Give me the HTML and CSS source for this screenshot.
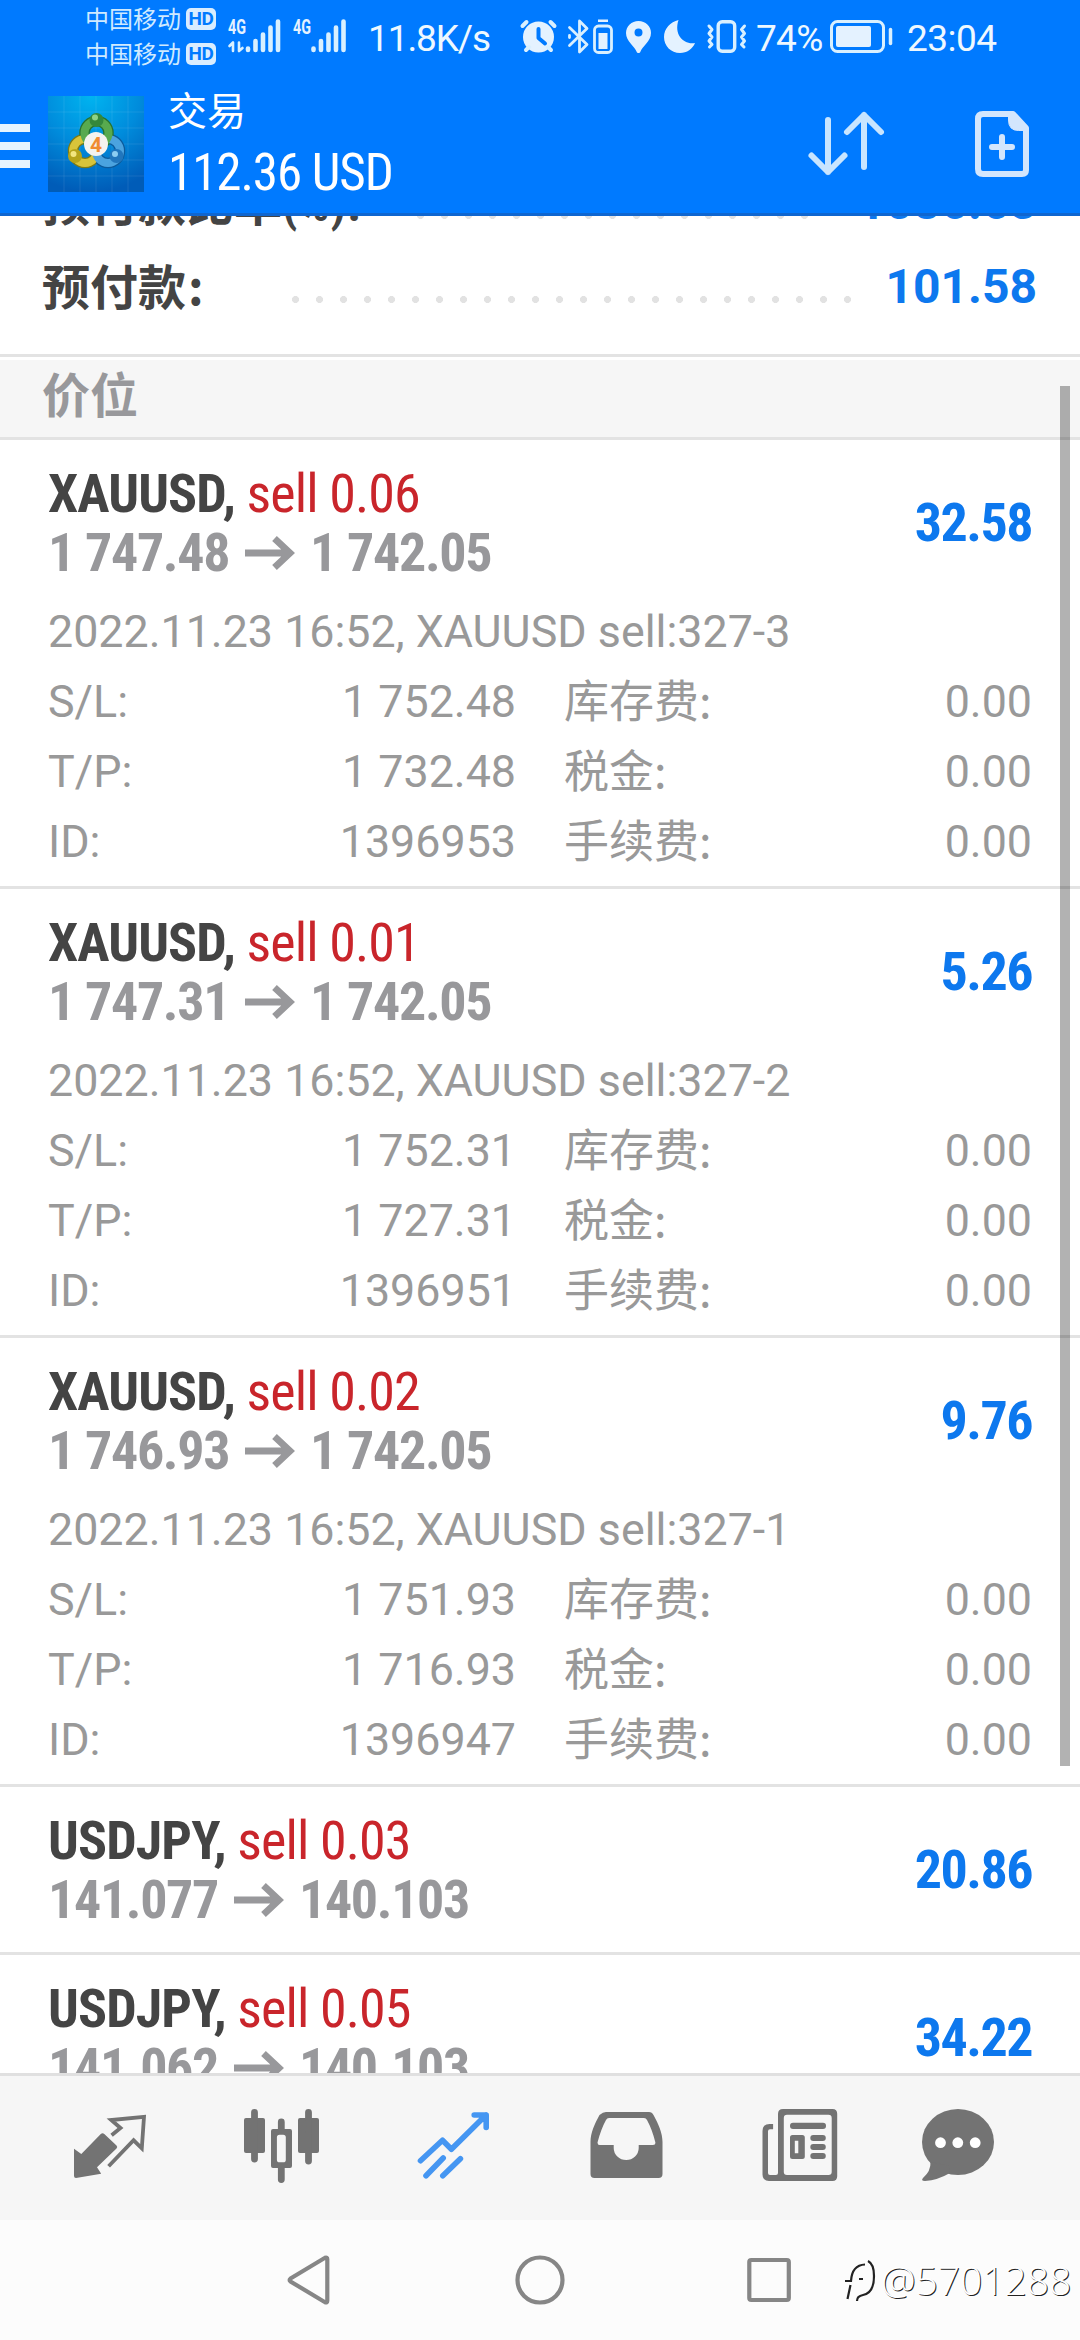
FILE: index.html
```html
<!DOCTYPE html>
<html lang="zh-CN">
<head>
<meta charset="utf-8">
<title>交易</title>
<link rel="stylesheet" href="styles.css">
</head>
<body>
<svg width="0" height="0" class="defs"><symbol id="arrow" viewBox="0 0 50 34"><path d="M0 17h44M29.500 2.500L45 17 29.500 31.500" fill="none" stroke="currentColor" stroke-width="6.800"/></symbol></svg>
<div class="screen">
  <header class="top">
    <div class="status">
      <div class="carriers">
        <div class="carrier"><span>中国移动</span><b class="hd">HD</b></div>
        <div class="carrier"><span>中国移动</span><b class="hd">HD</b></div>
      </div>
      <svg class="signals" width="122" height="72" viewBox="226 0 122 72">
        <g class="net"><text x="228" y="34" textLength="18" lengthAdjust="spacingAndGlyphs">4G</text><text x="293" y="34" textLength="18" lengthAdjust="spacingAndGlyphs">4G</text></g>
        <path d="M229.500 46l3.500-3.500V51M242.500 48l-3.500 3V42.500" class="line" stroke-width="2.600"/>
        <path d="M248 48.500v1.500M255.500 41v9M263 34.500V50M270.500 27.500V50M278 21.500V50M313.500 48.500v1.500M321 41v9M328.500 34.500V50M336 27.500V50M343.500 21.500V50" class="line" stroke-width="4.600"/>
      </svg>
      <span class="speed">11.8K/s</span>
      <svg class="tray" width="230" height="72" viewBox="519 0 230 72">
        <circle cx="538.500" cy="37" r="15.500"/>
        <path class="line" stroke-width="4" d="M522.500 26l4-4M554.500 26l-4-4M526 50l3-3M551 50l-3-3"/>
        <path class="cut" d="M538.500 29v9l6.500 5.500"/>
        <path class="line" stroke-width="2.800" d="M569.500 27.500L587 44.500 579.500 52V21L587 28.500 569.500 45.500M569.500 35.500v2"/>
        <rect class="line" stroke-width="2.800" x="594.500" y="26" width="17" height="26.500" rx="4"/>
        <path d="M598.500 33h9v16h-9zM598 19.500h10v2.500h-10z"/>
        <path fill-rule="evenodd" d="M638.500 21c7 0 12.500 5 12.500 12 0 8-9 14-10.500 18.500-.8 2-3.200 2-4 0C635 47 626 41 626 33c0-7 5.500-12 12.500-12zm0 7.500a4 4 0 1 0 0 8 4 4 0 0 0 0-8z"/>
        <path d="M678.500 20c-8 2-14.500 8.500-14.500 17 0 9 7 16 16 16 7 0 12.500-4 15-10-11 2-21.500-8-16.500-23z"/>
        <rect class="line" stroke-width="3.400" x="718.200" y="21.700" width="16.500" height="29.500" rx="4"/>
        <path class="line" stroke-width="3" d="M709 26l3 3.500-3 4 3 3.500-3 4 3 3.500-2.500 2.500M744.500 26l-3 3.500 3 4-3 3.500 3 4-3 3.500 2.500 2.500"/>
      </svg>
      <span class="percent">74%</span>
      <svg class="battery" width="66" height="72" viewBox="829 0 66 72">
        <rect class="line" stroke-width="3" x="831.500" y="21.500" width="52" height="30" rx="6"/>
        <rect x="836" y="26" width="35" height="21" rx="2"/>
        <path class="line" stroke-width="3.500" d="M890.500 29.500v14"/>
      </svg>
      <span class="clock">23:04</span>
    </div>
    <div class="appbar">
      <div class="menu"><i></i><i></i><i></i></div>
      <svg class="logo" width="96" height="96" viewBox="0 0 96 96">
        <defs>
          <radialGradient id="sky" cx=".45" cy="0" r="1"><stop offset="0" stop-color="#00b4f0"/><stop offset=".5" stop-color="#008cdc"/><stop offset="1" stop-color="#005cb8"/></radialGradient>
        </defs>
        <path fill="url(#sky)" d="M0 0h96v96H0z"/>
        <path stroke="#fff" stroke-opacity=".09" d="M16 0v96M32 0v96M48 0v96M64 0v96M80 0v96M0 16h96M0 32h96M0 48h96M0 64h96M0 80h96"/>
        <g fill="none">
          <circle cx="37" cy="55" r="12" stroke="#7c7a16" stroke-width="10.500"/>
          <circle cx="60" cy="55" r="12" stroke="#0c5b9c" stroke-width="10.500"/>
          <circle cx="48.500" cy="37" r="12" stroke="#27722f" stroke-width="10.500"/>
          <circle cx="37" cy="55" r="12" stroke="#d8c43a" stroke-width="8"/>
          <circle cx="60" cy="55" r="12" stroke="#4ba3df" stroke-width="8"/>
          <circle cx="48.500" cy="37" r="12" stroke="#58aa4e" stroke-width="8"/>
        </g>
        <circle cx="48.500" cy="24" r="7" fill="#34883c"/><circle cx="47" cy="21.500" r="3" fill="#8ed286"/>
        <circle cx="27" cy="60" r="7" fill="#b5a41b"/><circle cx="25.500" cy="58" r="3" fill="#f2e680"/>
        <circle cx="68.500" cy="60" r="7" fill="#2176bd"/><circle cx="67" cy="58" r="3" fill="#8ccdf2"/>
        <circle cx="48" cy="48" r="12" fill="#f4f3ef"/>
        <text x="48" y="55.500" class="four">4</text>
      </svg>
      <div class="heading"><span class="title">交易</span><span class="sum cond">112.36 USD</span></div>
      <svg class="sort" width="80" height="72" viewBox="806 108 80 72"><path d="M828 120v52M811.500 155.500L828 172l16.500-16.500M864 167v-52M847 132l17-17 17 17"/></svg>
      <svg class="add" width="56" height="70" viewBox="974 109 56 70"><path d="M983 114h30l13 14v42q0 4-4 4h-39q-5 0-5-5v-50q0-5 5-5z"/><path d="M1002 137v20M992 147h20"/><path d="M1008.500 114v6q0 10.500 10 10.500h7.500L1013 114z" fill="#d3e6fd" stroke-width="1"/></svg>
    </div>
  </header>

  <main class="content">
    <div class="summary">
      <div class="line-item first"><span class="label">预付款比率<span class="cond ratio">(%):</span></span><i class="dots dots-a"></i><b class="value">1086.63</b></div>
      <div class="line-item"><span class="label">预付款<span class="colon">:</span></span><i class="dots dots-b"></i><b class="value">101.58</b></div>
    </div>
    <h2 class="section">价位</h2>

    <article class="deal">
      <div class="deal-head">
        <div><p class="sym"><span class="cond"><b>XAUUSD,</b> <em>sell 0.06</em></span></p><p class="price"><b class="cond">1 747.48</b><svg class="arrow"><use href="#arrow"/></svg><b class="cond">1 742.05</b></p></div>
        <b class="profit cond">32.58</b>
      </div>
      <p class="note">2022.11.23 16:52, XAUUSD sell:327-3</p>
      <div class="grid">
        <p><span>S/L:</span><span>1 752.48</span></p><p><span class="cn">库存费:</span><span>0.00</span></p>
        <p><span>T/P:</span><span>1 732.48</span></p><p><span class="cn">税金:</span><span>0.00</span></p>
        <p><span>ID:</span><span>1396953</span></p><p><span class="cn">手续费:</span><span>0.00</span></p>
      </div>
    </article>

    <article class="deal">
      <div class="deal-head">
        <div><p class="sym"><span class="cond"><b>XAUUSD,</b> <em>sell 0.01</em></span></p><p class="price"><b class="cond">1 747.31</b><svg class="arrow"><use href="#arrow"/></svg><b class="cond">1 742.05</b></p></div>
        <b class="profit cond">5.26</b>
      </div>
      <p class="note">2022.11.23 16:52, XAUUSD sell:327-2</p>
      <div class="grid">
        <p><span>S/L:</span><span>1 752.31</span></p><p><span class="cn">库存费:</span><span>0.00</span></p>
        <p><span>T/P:</span><span>1 727.31</span></p><p><span class="cn">税金:</span><span>0.00</span></p>
        <p><span>ID:</span><span>1396951</span></p><p><span class="cn">手续费:</span><span>0.00</span></p>
      </div>
    </article>

    <article class="deal">
      <div class="deal-head">
        <div><p class="sym"><span class="cond"><b>XAUUSD,</b> <em>sell 0.02</em></span></p><p class="price"><b class="cond">1 746.93</b><svg class="arrow"><use href="#arrow"/></svg><b class="cond">1 742.05</b></p></div>
        <b class="profit cond">9.76</b>
      </div>
      <p class="note">2022.11.23 16:52, XAUUSD sell:327-1</p>
      <div class="grid">
        <p><span>S/L:</span><span>1 751.93</span></p><p><span class="cn">库存费:</span><span>0.00</span></p>
        <p><span>T/P:</span><span>1 716.93</span></p><p><span class="cn">税金:</span><span>0.00</span></p>
        <p><span>ID:</span><span>1396947</span></p><p><span class="cn">手续费:</span><span>0.00</span></p>
      </div>
    </article>

    <article class="deal">
      <div class="deal-head">
        <div><p class="sym"><span class="cond"><b>USDJPY,</b> <em>sell 0.03</em></span></p><p class="price"><b class="cond">141.077</b><svg class="arrow"><use href="#arrow"/></svg><b class="cond">140.103</b></p></div>
        <b class="profit cond">20.86</b>
      </div>
    </article>

    <article class="deal">
      <div class="deal-head">
        <div><p class="sym"><span class="cond"><b>USDJPY,</b> <em>sell 0.05</em></span></p><p class="price"><b class="cond">141.062</b><svg class="arrow"><use href="#arrow"/></svg><b class="cond">140.103</b></p></div>
        <b class="profit cond">34.22</b>
      </div>
    </article>
    <i class="scrollbar"></i>
  </main>

  <nav class="tabs">
    <svg viewBox="0 0 96 96"><path d="M12 48.700l7.300 5.300 19.500-20q1.800-1.500 3.500 0L54.500 45.500q1.500 1.500 0 3L35 67.300l4.200 6.400L14 77.900q-2 0-2-2z"/><path class="ln" stroke-width="3.800" d="M49.600 35.300l8.900-7.300-9.300-8L82 16.800l-2.200 31.500-8.200-8-25 26"/></svg>
    <svg viewBox="0 0 96 96"><rect x="10" y="18" width="21" height="35" rx="2"/><rect x="64" y="18" width="21" height="35" rx="2"/><path class="ln" stroke-width="6.800" stroke-linecap="round" d="M20.500 12.500v46.500M74.500 12.500V61M47.300 22v8M47.300 68v11.500"/><path fill-rule="evenodd" d="M39 29h17q2 0 2 2v35q0 2-2 2H39q-2 0-2-2V31q0-2 2-2zm6.500 5.700q-2.600 0-2.600 2.600v22.400q0 2.600 2.600 2.600h3.700q2.600 0 2.600-2.600V37.300q0-2.600-2.600-2.600z"/></svg>
    <svg class="on" viewBox="0 0 96 96"><path class="ln" stroke-width="5.600" stroke-linecap="round" stroke-linejoin="round" d="M14.500 60.700l22-20.400 8.900 9L80 15M68.200 15h12v12.500M76 16l4 5M20 75.700L37.200 58M36.800 75.700l17.600-17"/></svg>
    <svg viewBox="0 0 96 96"><path fill-rule="evenodd" d="M28 12h43q3 0 4.500 3c5 9 9 18 9 27v32q0 4-4 4h-64q-4 0-4-4V42c0-9 4-18 9-27Q25 12 28 12zm3 6q-2 0-3 2-5 9-8.500 22.500 0 2.500 2 2.500h14.200v3a12.500 12 0 0 0 25 0v-3h14.200q2.500 0 2.500-2.500Q74 29 69 20q-1-2-3-2z"/></svg>
    <svg viewBox="0 0 96 96"><path fill-rule="evenodd" d="M33 9h49.500q4.700 0 4.700 4.700v62.600q0 4.700-4.700 4.700H19q-6.500 0-6.500-6.500V31q0-7 7-7h3.600v5.300H20q-2 0-2 2V73q0 2 2 2h6q2 0 2-2V14q0-5 5-5zm4 5.700q-3.200 0-3.200 3.200V72q0 3 3.200 3h41.500q3.200 0 3.200-3V17.900q0-3.200-3.200-3.200z"/><rect x="40" y="22.700" width="36" height="6.300" rx="3"/><path fill-rule="evenodd" d="M42.500 35h9.800q2.500 0 2.500 2.500v19q0 2.500-2.500 2.500h-9.800Q40 59 40 56.500v-19Q40 35 42.500 35zm2.300 5.700v12.600h3.500V40.700z"/><path class="ln" stroke-width="6" stroke-linecap="round" d="M63.300 38h9.500M63.300 46.900h9.500M63.300 56h9.500"/></svg>
    <svg viewBox="0 0 96 96"><ellipse cx="36" cy="42" rx="36" ry="33"/><path d="M8.500 62q.5 9-7.500 16-2.500 3 2 3 13-1 24-7.500L28 66z"/><g fill="#fff"><circle cx="18.500" cy="42.700" r="5.400"/><circle cx="35.800" cy="42.700" r="5.400"/><circle cx="53.200" cy="42.700" r="5.400"/></g></svg>
  </nav>

  <div class="sysnav">
    <svg width="1080" height="120" viewBox="0 0 1080 120"><path d="M290.500 58.500L325 37.800q2.300-1 2.300 1.500v41.400q0 2.500-2.300 1.500L290.500 61.500q-1.800-1.500 0-3z"/><circle cx="540" cy="60" r="22.500"/><rect x="749.300" y="40" width="39.500" height="40" rx="2"/></svg>
    <div class="mark">
      <svg width="34" height="46" viewBox="0 0 34 46"><path d="M3.500 40l3-14M1 22h6q1-16 14-16.500M15 20h4M24 2q6 3 6 15 0 17-11 19-6 1-6 6"/></svg>
      <span>@5701288</span>
    </div>
  </div>
</div>
</body>
</html>
```
FILE: styles.css
```css
* { box-sizing: border-box; margin: 0; padding: 0; }
body { width: 1080px; height: 2340px; overflow: hidden; background: #fff; font-family: Roboto, "Noto Sans CJK SC", sans-serif; }
svg { display: block; flex: none; }
i, em { font-style: normal; }
.screen { display: flex; flex-direction: column; height: 2340px; }
.cond { font-family: "Roboto Condensed", Roboto, sans-serif; font-stretch: 75%; }

/* status bar and app bar */
.top { height: 216px; flex: none; background: #007aff; border-bottom: 3px solid #0f66d0; color: #eef8ff; }
.status { display: flex; height: 72px; padding-left: 85px; }
.carriers { padding-top: 1px; }
.carrier { display: flex; align-items: center; height: 35px; font: 24px/34px "Noto Sans CJK SC", sans-serif; color: #cfeaff; }
.carrier span { width: 101px; margin-top: -2px; }
.hd { width: 30px; height: 22px; border-radius: 5px; background: #d9edff; color: #007aff; font: bold 19px/22px Roboto, sans-serif; text-align: center; letter-spacing: -.5px; }
.signals, .tray, .battery { fill: #e4f2ff; }
.signals { margin-left: 10px; }
.net { font: bold 20px Roboto, sans-serif; }
.line { fill: none; stroke: #d9f0ff; stroke-linecap: round; stroke-linejoin: round; }
.cut { fill: none; stroke: #007aff; stroke-width: 4; stroke-linecap: round; stroke-linejoin: round; }
.speed, .percent, .clock { font-size: 37px; line-height: 77px; white-space: nowrap; }
.speed { width: 151px; margin-left: 20px; letter-spacing: -1.1px; }
.percent { width: 73px; margin-left: 7px; letter-spacing: -.7px; }
.clock { margin-left: 12px; letter-spacing: -.5px; }
.appbar { display: flex; height: 141px; }
.menu { display: flex; flex-direction: column; gap: 10px; width: 30px; padding-top: 52px; }
.menu i { height: 8px; background: #e6f4ff; }
.logo { margin: 24px 0 0 18px; }
.four { font: bold 21px Roboto, sans-serif; fill: #f08c32; text-anchor: middle; }
.heading { display: flex; flex-direction: column; width: 637px; margin-left: 24px; padding-top: 14px; color: #fff; }
.title { font: 39px/44px "Noto Sans CJK SC", sans-serif; }
.sum { font-size: 51px; line-height: 60px; margin-top: 13px; letter-spacing: -1.05px; }
.sort, .add { fill: none; stroke: #c8e5ff; stroke-width: 6; stroke-linecap: round; stroke-linejoin: round; }
.sort { margin: 36px 0 0 1px; }
.add { margin: 37px 0 0 88px; stroke: #d3e6fd; }

/* account summary */
.content { position: relative; height: 1857px; flex: none; overflow: hidden; }
.summary { height: 141px; border-bottom: 3px solid #e3e3e3; overflow: hidden; }
.line-item { display: flex; height: 84px; padding: 0 43px 0 42px; }
.line-item.first { margin-top: -55px; }
.label { flex: 1; font: bold 48px/78px "Noto Sans CJK SC", sans-serif; color: #444; white-space: nowrap; }
.ratio { letter-spacing: 1.200px; }
.colon { margin-left: 2px; }
.value { font-size: 48px; line-height: 84px; color: #0d78ee; }
.dots { height: 7px; margin-top: 51px; background: radial-gradient(circle at 3.5px 3.5px, #e2e2e2 3.2px, transparent 3.8px) 0 0 / 24px 7px repeat-x; }
.dots-a { width: 391px; margin-right: 50px; }
.dots-b { width: 559px; margin-right: 34px; }
.section { height: 83px; border-top: 3px solid #fff; border-bottom: 3px solid #e3e3e3; padding-left: 42px; background: #f6f6f6; font: bold 48px/64px "Noto Sans CJK SC", sans-serif; color: #98989b; }

/* open positions */
.deal { padding: 0 48px; border-bottom: 3px solid #e3e3e3; color: #999; }
.deal-head { display: flex; justify-content: space-between; align-items: center; height: 165px; }
.sym, .price { height: 59px; line-height: 59px; font-size: 54px; white-space: nowrap; letter-spacing: -.9px; }
.sym b { color: #444; }
.sym em { color: #c9252b; }
.price { display: flex; align-items: center; color: #98989b; letter-spacing: -1.35px; }
.defs { position: absolute; }
.arrow { width: 50px; height: 34px; margin: 2px 15px 0 16px; }
.profit { font-size: 54px; color: #0d78ee; letter-spacing: -1.5px; }
.note, .grid p { font-size: 44.8px; height: 70px; line-height: 70px; white-space: nowrap; }
.note { margin-top: -8px; }
.grid { display: grid; grid-template-columns: 468px 468px; column-gap: 48px; padding-bottom: 9px; }
.grid p { display: flex; justify-content: space-between; }
.cn { font: 45px/64px "Noto Sans CJK SC", sans-serif; }
.scrollbar { position: absolute; right: 10px; top: 170px; width: 10px; height: 1380px; background: rgba(0, 0, 0, .3); }

/* bottom bars */
.tabs { display: flex; justify-content: space-between; height: 147px; flex: none; padding: 24px 62px 0; border-top: 3px solid #e0e0e0; background: #f6f6f6; fill: #737373; }
.tabs svg { width: 96px; height: 96px; overflow: visible; }
.ln { fill: none; stroke: #737373; }
.on .ln { stroke: #4596f2; }
.sysnav { position: relative; height: 120px; background: #fcfcfc; fill: none; stroke: #868686; stroke-width: 4.200; }
.mark { position: absolute; left: 844px; top: 39px; display: flex; color: #fff; }
.mark span { margin-left: 3px; font: 300 39px/42px "Open Sans", sans-serif; text-shadow: 1px 1px 0 #222; white-space: nowrap; }
.mark svg { stroke: #222; stroke-width: 2.200; }
```
